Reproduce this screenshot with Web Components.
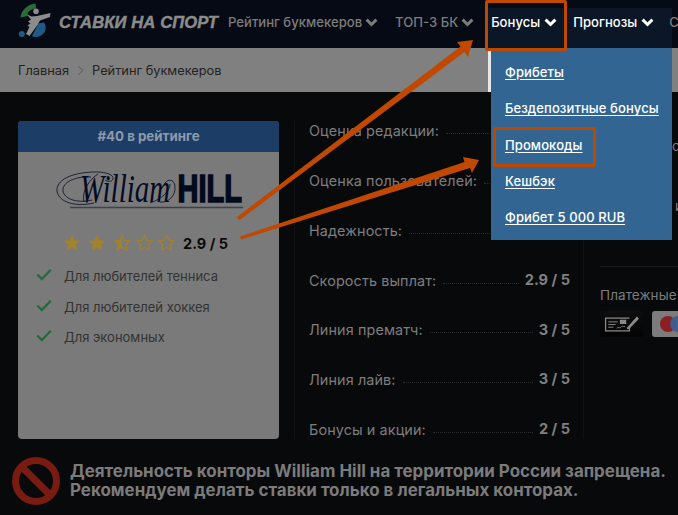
<!DOCTYPE html>
<html lang="ru"><head><meta charset="utf-8"><title>Ставки на спорт</title>
<style>
html,body{margin:0;padding:0;height:515px;overflow:hidden;background:#08090b;font-family:Inter,"Noto Sans",sans-serif}
rating-page{display:block}
</style></head><body>
<rating-page>
  <site-header>
    <nav-item>Рейтинг букмекеров</nav-item>
    <nav-item style="margin-left:17px">ТОП-3 БК</nav-item>
    <nav-group>
      <nav-item bright>Бонусы</nav-item>
      <nav-item bright style="margin-left:16px">Прогнозы</nav-item>
    </nav-group>
    <nav-item plain>С</nav-item>
  </site-header>
  <crumb-bar><span>Главная</span><span>Рейтинг букмекеров</span></crumb-bar>
  <main-grid>
    <bk-card slot="card">
      <check-item>Для любителей тенниса</check-item>
      <check-item>Для любителей хоккея</check-item>
      <check-item>Для экономных</check-item>
    </bk-card>
    <rating-list slot="list">
      <rating-row label="Оценка редакции:"></rating-row>
      <rating-row label="Оценка пользователей:"></rating-row>
      <rating-row label="Надежность:"></rating-row>
      <rating-row label="Скорость выплат:" value="2.9 / 5"></rating-row>
      <rating-row label="Линия прематч:" value="3 / 5"></rating-row>
      <rating-row label="Линия лайв:" value="3 / 5"></rating-row>
      <rating-row label="Бонусы и акции:" value="2 / 5"></rating-row>
    </rating-list>
    <side-info slot="side"></side-info>
  </main-grid>
  <ban-notice>Деятельность конторы William Hill на территории России запрещена.<br>Рекомендуем делать ставки только в легальных конторах.</ban-notice>
  <drop-menu>
    <a>Фрибеты</a><a>Бездепозитные бонусы</a><a>Промокоды</a><a>Кешбэк</a><a>Фрибет 5 000 RUB</a>
  </drop-menu>
  <call-out style="left:485px;top:0;width:82px;height:51px"></call-out>
  <call-out style="left:493px;top:127px;width:103px;height:40px"></call-out>
  <arrow-layer></arrow-layer>
</rating-page>
<script>
function def(name, css, html, extra){
  customElements.define(name, class extends HTMLElement{
    constructor(){super();const r=this.attachShadow({mode:'open'});
      r.innerHTML='<style>'+css+'</style>'+(typeof html==='function'?html(this):html);}
    connectedCallback(){ if(extra) extra(this); }
  });
}
const FONT='font-family:Inter,"Noto Sans",sans-serif;';
def('rating-page',':host{display:block;position:relative;width:678px;height:515px;overflow:hidden}','<slot></slot>');

def('site-header',`:host{display:flex;height:48px;background:#050a14;align-items:stretch;box-sizing:border-box;padding-left:18px;white-space:nowrap;overflow:hidden;${FONT}}
.logo{display:flex;align-items:center;flex:none}
svg{display:block;flex:none}
b{font:italic 700 16.6px "Liberation Sans",sans-serif;color:#8b8b8b;margin-left:5px;margin-top:-2px;letter-spacing:.1px;width:159px;margin-right:10px;-webkit-text-stroke:.45px #8b8b8b}
.items{display:flex;align-items:stretch}`,
`<div class="logo"><svg width="36" height="40" viewBox="18 4 36 40" style="margin-top:-3px">
<path d="M20.5 18.5C21 11 28 5 35.5 4.5L36 9.5C32 10 29 11.5 27.5 14.5L28 17Z" fill="#2a6b37"/>
<path d="M44 23.5C47.5 28 45.5 35.5 39 37.5C36 38.5 33.5 38 32 37L38.5 24.5Z" fill="#1f5a86"/>
<circle cx="21.8" cy="35" r="3" fill="#1f5a86"/>
<circle cx="36" cy="12.3" r="2.8" fill="#8c8c8c"/>
<path d="M27 15.5L31.5 17.5L37 17L50.5 14L50 18L40 21.5L37.5 26L29.5 37L26 35L29.5 28L27.5 26.5L30.5 24.5L28 22.5L31 20.5Z" fill="#8c8c8c"/>
</svg><b>СТАВКИ НА СПОРТ</b></div><div class="items"><slot></slot></div>`);

def('nav-item',`:host{display:flex;align-items:center;gap:3px;color:#7c7c7c;font:500 13.1px Inter,"Noto Sans",sans-serif;height:40px;margin-top:2px;flex:none}
:host([bright]){color:#fff;margin-top:-6px;gap:4px}
:host([plain]){margin-left:-3px}
svg{display:block;flex:none}`,
el=>`<slot></slot>${el.hasAttribute('plain')?'':'<svg width="13" height="9" viewBox="0 0 13 9"><path d="M1.6 1.6L6.5 6.5L11.4 1.6" fill="none" stroke="currentColor" stroke-width="3"/></svg>'}`);

def('nav-group',`:host{display:flex;align-items:flex-start;margin-left:14px;margin-top:8px;height:40px;width:184px;box-sizing:border-box;padding-left:3px;background:#0b1626;flex:none}`,'<slot></slot>');

def('crumb-bar',`:host{display:flex;height:44px;align-items:center;background:#808080;padding-left:18px;color:#232323;font:400 12.8px Inter,"Noto Sans",sans-serif}
.s{display:flex;align-items:center;gap:8px}svg{display:block}`,
`<div class="s"><slot></slot></div>`,
el=>{const a=el.children[0];if(a&&!a.dataset.d){a.dataset.d=1;a.insertAdjacentHTML('afterend','<svg xmlns="http://www.w3.org/2000/svg" width="7" height="11" viewBox="0 0 7 11" aria-hidden="true"><path d="M1 1l5 4.5L1 10" fill="none" stroke="#5a5a5a" stroke-width="1"/></svg>');}});

def('main-grid',`:host{display:grid;grid-template-columns:261px 290px 1fr;column-gap:15px;padding:29px 0 0 18px;height:318px;align-items:stretch;box-sizing:content-box}
::slotted(side-info){margin-left:-15px}`,
`<slot name="card"></slot><slot name="list"></slot><slot name="side"></slot>`);

def('bk-card',`:host{display:flex;flex-direction:column;background:#7a7a7a;border-radius:4px;overflow:hidden;height:318px;${FONT}}
.h{height:31px;background:#1c3d66;color:#8c9aab;font:700 13.3px/31px Inter,"Noto Sans",sans-serif;text-align:center;flex:none}
.logo{display:flex;justify-content:center;margin-top:11px}
svg{display:block}
.r{display:flex;align-items:center;margin:20px 0 0 46px;height:24px}
.r b{font:700 14.5px Inter,"Noto Sans",sans-serif;color:#0a0a0a;margin-left:8px}
.l{display:flex;flex-direction:column;gap:10.6px;margin-top:11px;padding-left:18px}`,
`<div class="h">#40 в рейтинге</div>
<div class="logo"><svg width="190" height="48" viewBox="0 -6 190 48">
<g fill="none" stroke="#050b24" stroke-width=".8">
<path d="M40 34C18 39 2 31 3 20C4 9 22 3 42 3C53 3 60 6 59 10C58 13 53 13 51 11"/>
<path d="M38 31C22 35 8 29 9 20C10 12 24 7 37 8"/>
<path d="M44 5C36 10 27 22 30 33"/>
<path d="M106 33C114 34 122 27 121 17C120 9 112 10 110 16"/>
<path d="M96 34C108 30 116 22 116 15"/>
</g>
<g transform="scale(1,1.35)">
<text x="26" y="24.4" font-family="Liberation Serif" font-style="italic" font-size="29" fill="#050b24">William</text>
<text x="123.5" y="24.8" font-family="Liberation Sans" font-weight="700" font-size="29" fill="#040a1e" stroke="#040a1e" stroke-width="1.2">HILL</text>
</g>
<path d="M16 38.5H189" stroke="#3b4152" stroke-width="1.3"/>
</svg></div>
<div class="r"><svg width="111" height="18" viewBox="0 0 111 18">
<defs><path id="s" d="M8 .3l2.4 5 5.5.6-4.1 3.8 1.1 5.5L8 12.5l-4.9 2.7 1.1-5.5L.1 5.9l5.5-.6z"/></defs>
<use href="#s" x="0" y="1" fill="#a08230" stroke="#a08230" stroke-width=".5"/><use href="#s" x="25" y="1" fill="#a08230" stroke="#a08230" stroke-width=".5"/>
<use href="#s" x="50" y="1" fill="none" stroke="#a08230" stroke-width="1.1"/>
<path d="M58 1.3L55.6 6.3L50.1 6.9L54.2 10.7L53.1 16.2L58 13.5Z" fill="#a08230"/>
<use href="#s" x="72.5" y="1" fill="none" stroke="#a08230" stroke-width="1.1"/>
<use href="#s" x="94.5" y="1" fill="none" stroke="#a08230" stroke-width="1.1"/>
</svg><b>2.9 / 5</b></div>
<div class="l"><slot></slot></div>`);

def('check-item',`:host{display:flex;align-items:center;gap:12px;height:20px;color:#333;font:400 13px Inter,"Noto Sans",sans-serif}svg{display:block;flex:none}`,
`<svg width="16" height="13" viewBox="0 0 16 13" style="margin-top:-3px"><path d="M1.3 6.5L5.8 11L14.8 1.8" fill="none" stroke="#27693f" stroke-width="2.3"/></svg><span><slot></slot></span>`);

def('rating-list',`:host{display:flex;flex-direction:column;gap:29.7px;box-sizing:border-box;padding:0 13px 0 14px;border-left:1px solid #111214;border-right:1px solid #111214;height:318px}`,'<slot></slot>');

def('rating-row',`:host{display:flex;align-items:center;height:20px;font:400 14.4px Inter,"Noto Sans",sans-serif;color:#7d7d7d;white-space:nowrap;letter-spacing:.1px}
i{flex:1;border-bottom:1px dotted #2b2b2d;margin:6px 6px 0 7px;min-width:4px}
b{font-weight:700;font-size:14.6px;color:#808080;letter-spacing:0}`,
el=>`<span>${el.getAttribute('label')}</span><i></i>${el.hasAttribute('value')?`<b>${el.getAttribute('value')}</b>`:''}`);

def('side-info',`:host{display:block;padding-left:16px;${FONT}color:#7d7d7d;font-size:13.5px;white-space:nowrap;overflow:hidden}
.a{margin-top:15px;padding-left:72px;line-height:20px}
.b{margin-top:40px;padding-left:75px;line-height:20px}
hr{border:0;border-top:1px solid #1a1b1d;margin:50px 0 0}
.p{margin-top:18px;line-height:20px;letter-spacing:.1px}
.t{display:flex;gap:9px;margin-top:6px}
.k{width:43px;height:26px;border-radius:3px;background:linear-gradient(#0e0e0e,#030303);display:flex;align-items:center;justify-content:center;flex:none}
.m{width:60px;height:26px;border-radius:3px;background:#7c7c7c;position:relative;flex:none}
.m i{position:absolute;top:5px;width:16px;height:16px;border-radius:50%}
svg{display:block}`,
`<div class="a">с.</div><div class="b">и</div><hr>
<div class="p">Платежные системы</div>
<div class="t"><div class="k"><svg width="36" height="22" viewBox="0 0 34 20"><g fill="none" stroke="#8a8a8a"><path d="M24 4.5H1.5V16.5H24V12" stroke-width="1.2"/><path d="M4 8h9M4 10.5h7M4 13h5" stroke-width=".9"/><path d="M12 14c2-2 3 1 4-1s2 0 4-.5" stroke-width=".8"/><rect x="15" y="6" width="6" height="4" fill="#8a8a8a" stroke="none"/></g><path d="M22 13L31 3L33 5L24 14.5L21.5 15Z" fill="#8a8a8a"/></svg></div>
<div class="m"><i style="left:8px;background:#8c1f1f"></i><i style="left:18px;background:#3d5f92;opacity:.95"></i></div></div>`);

def('ban-notice',`:host{position:absolute;left:12px;top:457px;display:flex;align-items:center;gap:10px;white-space:nowrap}
svg{display:block;flex:none}
div{font:700 16.95px/19px Inter,"Liberation Sans",sans-serif;color:#7b7b7b}`,
`<svg width="48" height="48" viewBox="0 0 48 48"><circle cx="24" cy="24" r="20.5" fill="none" stroke="#7a1b12" stroke-width="7"/><path d="M9.5 9.5L38.5 38.5" stroke="#7a1b12" stroke-width="7"/></svg><div><slot></slot></div>`);

def('drop-menu',`:host{position:absolute;left:491px;top:48px;width:181px;height:192px;background:#326592;display:flex;flex-direction:column;box-sizing:border-box;padding:6px 0 0 14px}
:host::before{content:"";position:absolute;left:-3px;top:0;width:3px;height:44px;background:#e8e8e8}
::slotted(a){display:block;height:36.3px;color:#fff;font:500 13px/36.3px Inter,"Noto Sans",sans-serif;text-decoration:underline;text-underline-offset:2px;letter-spacing:.1px;white-space:nowrap}`,'<slot></slot>');

def('call-out',`:host{position:absolute;box-sizing:border-box;border:3px solid #bf4700;border-radius:2px}`,'');

def('arrow-layer',`:host{position:absolute;left:0;top:0;width:678px;height:515px;pointer-events:none}svg{display:block}`,
`<svg width="678" height="515" viewBox="0 0 678 515" fill="#c04800">
<path d="M237 217L460.5 46.5L457 42L473 40L468 57L464.5 52L239.5 220Z"/>
<path d="M240 236.5L464.5 162L463 157L479 160L472 173L470 168L241 239.5Z"/>
</svg>`);
</script>
</body></html>
